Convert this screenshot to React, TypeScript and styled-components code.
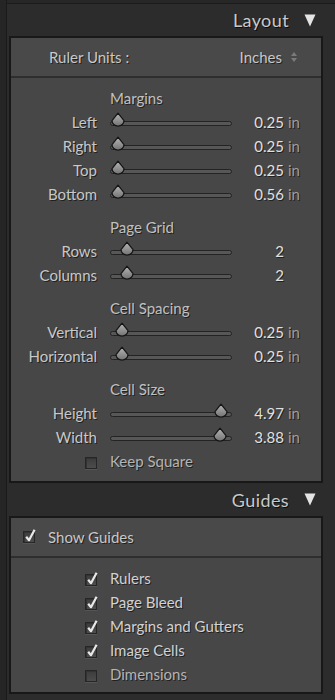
import React from 'react'
import styled, { createGlobalStyle } from 'styled-components'

const GlobalStyle = createGlobalStyle`
  html, body {
    margin: 0;
    padding: 0;
    background: #2b2b2b;
  }
  body {
    font-family: Lato, "Open Sans", sans-serif;
  }
`

const Frame = styled.div`
  width: 335px;
  height: 700px;
  overflow: hidden;
  background: #2c2c2c;
  box-sizing: border-box;
  padding: 4px 12px 0 9px;
  display: flex;
  flex-direction: column;
  box-shadow: inset 6px 0 0 #252525, inset 7px 0 0 #1a1a1a, inset 0 3px 0 #272727, inset 0 4px 0 #1b1b1b;
`

const Header = styled.div<{ $h: number }>`
  height: ${p => p.$h}px;
  display: flex;
  align-items: center;
  justify-content: flex-end;
  gap: 15px;
  padding-right: 7px;
  color: #c9c9c9;
  font-size: 18px;
  letter-spacing: 0.4px;
  text-shadow: 1px 1px 0 rgba(0, 0, 0, 0.7);
`

const Panel = styled.div`
  border: 2px solid #181818;
  background: #474747;
  color: #c8c8c8;
  font-size: 15px;
  text-shadow: 1px 1px 0 rgba(0, 0, 0, 0.55);
`

const TopRow = styled.div<{ $indent: number }>`
  height: 38px;
  display: flex;
  align-items: center;
  padding: 0 24px 0 ${p => p.$indent}px;
  gap: 13px;
  background: #494949;
  border-bottom: 2px solid #2e2e2e;
`

const Grow = styled.span`
  flex: 1;
`

const Stepper = styled.span`
  display: inline-flex;
  flex-direction: column;
  gap: 2px;
  margin-left: -4px;
`

const Body = styled.div<{ $pb: number }>`
  padding: 8px 0 ${p => p.$pb}px;
`

const Row = styled.div<{ $gap?: number }>`
  height: 24px;
  display: grid;
  grid-template-columns: 99px 124px 50px 22px;
  align-items: center;
  margin-top: ${p => p.$gap ?? 0}px;
`

const Label = styled.span`
  text-align: right;
  padding-right: 13px;
  white-space: nowrap;
`

const Title = styled.span`
  grid-column: 2 / 5;
  color: #c0c0c0;
`

const Track = styled.div`
  position: relative;
  width: 122px;
  height: 5px;
  box-sizing: border-box;
  border: 1px solid #232323;
  border-radius: 3px;
  background: #575757;
  margin-top: 2px;
`

const Knob = styled.svg`
  position: absolute;
  top: -10px;
  width: 16px;
  height: 16px;
  overflow: visible;
`

const Value = styled.span`
  text-align: right;
  color: #e0e0e0;
`

const Unit = styled.span`
  padding-left: 4px;
  color: #9c9c9c;
`

const CheckCell = styled.span`
  display: flex;
  justify-content: flex-end;
  padding: 3px 13px 0 0;
`

const CheckLabel = styled.span<{ $dim?: boolean }>`
  grid-column: 2 / 5;
  white-space: nowrap;
  color: ${p => (p.$dim ? '#b4b4b4' : '#d2d2d2')};
`

const Box = styled.span`
  position: relative;
  display: inline-block;
  width: 12px;
  height: 12px;
  box-sizing: border-box;
  border: 1px solid #262626;
  background: linear-gradient(#3c3c3c, #4c4c4c);
  box-shadow: inset 1px 1px 0 #333, 0 1px 0 #555;
`

const Tick = styled.svg`
  position: absolute;
  left: 0;
  top: -4px;
  width: 13px;
  height: 15px;
  overflow: visible;
`

const Arrow = () => (
  <svg width="12" height="13" viewBox="0 0 12 13">
    <path d="M0.5 0.5 H11.5 L6 12.5 Z" fill="#e4e4e4" />
  </svg>
)

const Check = ({ on }: { on: boolean }) => (
  <Box>
    {on && (
      <Tick viewBox="0 0 13 15">
        <path d="M2.2 8.8 L5 12.2 L10.6 1.8" fill="none" stroke="#e8e8e8" strokeWidth="2.2" strokeLinejoin="round" />
      </Tick>
    )}
  </Box>
)

const Slider = ({ at }: { at: number }) => (
  <Track>
    <Knob viewBox="0 0 16 16" style={{ left: at - 8 }}>
      <defs>
        <linearGradient id="kg" x1="0" y1="0" x2="0" y2="1">
          <stop offset="0" stopColor="#b6b6b6" />
          <stop offset="1" stopColor="#727272" />
        </linearGradient>
      </defs>
      <path d="M8 1.2 L14 8.6 A6 5.6 0 0 1 2 8.6 Z" fill="url(#kg)" stroke="#141414" strokeWidth="1.2" strokeLinejoin="round" />
    </Knob>
  </Track>
)

type Item = { label: string; value: string; unit?: string; at: number }
type Group = { title: string; items: Item[] }

const groups: Group[] = [
  {
    title: 'Margins',
    items: [
      { label: 'Left', value: '0.25', unit: 'in', at: 7 },
      { label: 'Right', value: '0.25', unit: 'in', at: 7 },
      { label: 'Top', value: '0.25', unit: 'in', at: 7 },
      { label: 'Bottom', value: '0.56', unit: 'in', at: 7 },
    ],
  },
  {
    title: 'Page Grid',
    items: [
      { label: 'Rows', value: '2', at: 16 },
      { label: 'Columns', value: '2', at: 16 },
    ],
  },
  {
    title: 'Cell Spacing',
    items: [
      { label: 'Vertical', value: '0.25', unit: 'in', at: 11 },
      { label: 'Horizontal', value: '0.25', unit: 'in', at: 11 },
    ],
  },
  {
    title: 'Cell Size',
    items: [
      { label: 'Height', value: '4.97', unit: 'in', at: 110 },
      { label: 'Width', value: '3.88', unit: 'in', at: 109 },
    ],
  },
]

const guides = [
  { label: 'Rulers', on: true },
  { label: 'Page Bleed', on: true },
  { label: 'Margins and Gutters', on: true },
  { label: 'Image Cells', on: true },
  { label: 'Dimensions', on: false },
]

export default function App() {
  return (
    <Frame>
      <GlobalStyle />
      <Header $h={32}>
        <span>Layout</span>
        <Arrow />
      </Header>
      <Panel>
        <TopRow $indent={38}>
          <span>Ruler Units :</span>
          <Grow />
          <span>Inches</span>
          <Stepper>
            <svg width="6" height="4" viewBox="0 0 6 4"><path d="M3 0 L6 4 H0 Z" fill="#7a7a7a" /></svg>
            <svg width="6" height="4" viewBox="0 0 6 4"><path d="M0 0 H6 L3 4 Z" fill="#7a7a7a" /></svg>
          </Stepper>
        </TopRow>
        <Body $pb={8}>
          {groups.map((g, gi) => (
            <React.Fragment key={g.title}>
              <Row $gap={gi === 0 ? 0 : 9}>
                <Title>{g.title}</Title>
              </Row>
              {g.items.map(it => (
                <Row key={it.label}>
                  <Label>{it.label}</Label>
                  <Slider at={it.at} />
                  <Value>{it.value}</Value>
                  <Unit>{it.unit ?? ''}</Unit>
                </Row>
              ))}
            </React.Fragment>
          ))}
          <Row>
            <CheckCell><Check on={false} /></CheckCell>
            <CheckLabel $dim>Keep Square</CheckLabel>
          </Row>
        </Body>
      </Panel>
      <Header $h={33}>
        <span>Guides</span>
        <Arrow />
      </Header>
      <Panel>
        <TopRow $indent={12}>
          <Check on />
          <span>Show Guides</span>
        </TopRow>
        <Body $pb={6}>
          {guides.map(g => (
            <Row key={g.label}>
              <CheckCell><Check on={g.on} /></CheckCell>
              <CheckLabel $dim={!g.on}>{g.label}</CheckLabel>
            </Row>
          ))}
        </Body>
      </Panel>
    </Frame>
  )
}
